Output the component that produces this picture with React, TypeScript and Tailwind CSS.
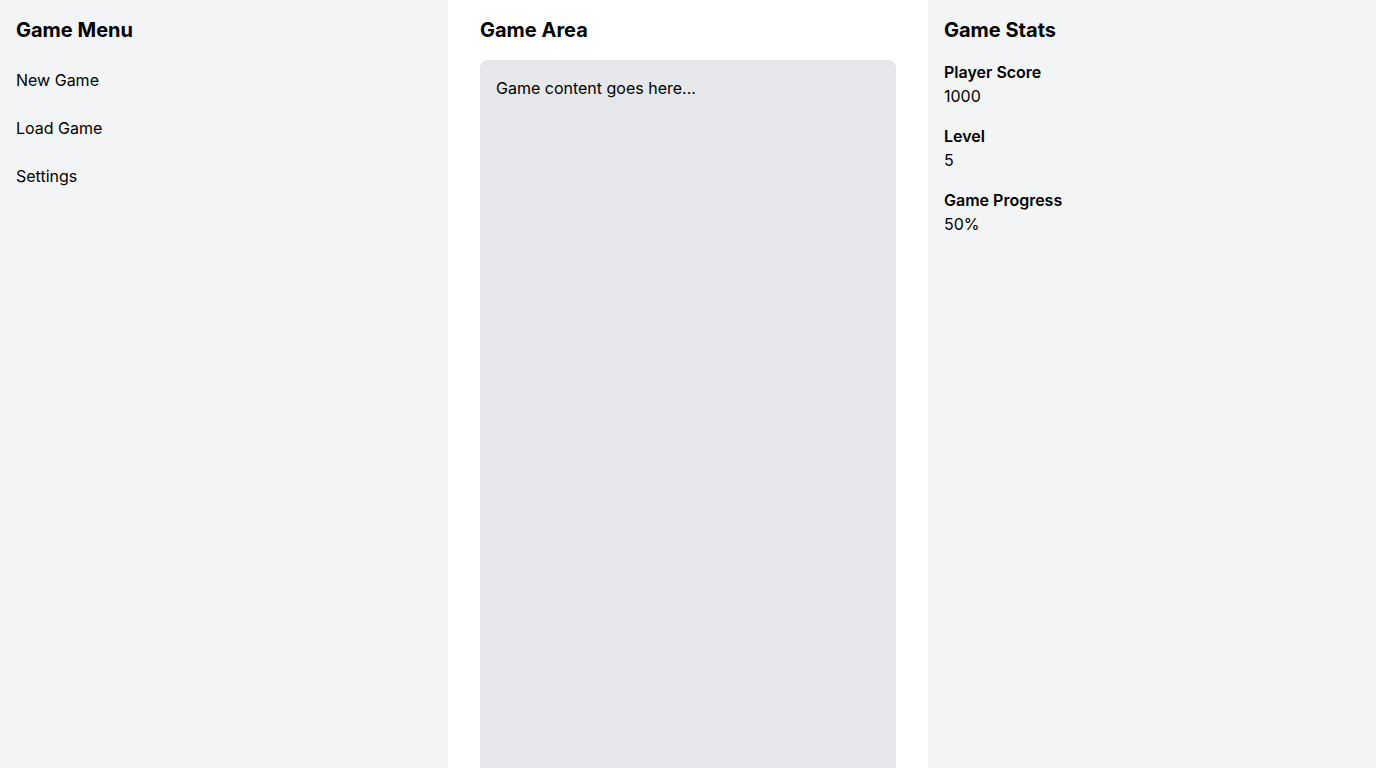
import React from "react";

const menuItems = ["New Game", "Load Game", "Settings"];

const stats = [
  { label: "Player Score", value: "1000" },
  { label: "Level", value: "5" },
  { label: "Game Progress", value: "50%" },
];

export default function App() {
  return (
    <div
      className="flex h-screen overflow-hidden bg-white text-black"
      style={{ fontFamily: "Inter, 'Noto Sans', sans-serif" }}
    >
      {/* menu */}
      <aside className="w-[448px] shrink-0 bg-gray-100 p-4">
        <h2 className="mb-4 text-xl font-bold">Game Menu</h2>
        <ul className="space-y-2">
          {menuItems.map((item) => (
            <li key={item} className="py-2 text-base">
              {item}
            </li>
          ))}
        </ul>
      </aside>

      {/* game area */}
      <main className="flex flex-1 flex-col px-8 pt-4">
        <h2 className="mb-4 text-xl font-bold">Game Area</h2>
        <div className="flex-1 rounded-t-lg bg-gray-200 p-4 text-base">
          Game content goes here...
        </div>
      </main>

      {/* stats */}
      <aside className="w-[448px] shrink-0 bg-gray-100 p-4">
        <h2 className="mb-4 text-xl font-bold">Game Stats</h2>
        <div className="space-y-4">
          {stats.map((s) => (
            <div key={s.label}>
              <div className="font-semibold">{s.label}</div>
              <div>{s.value}</div>
            </div>
          ))}
        </div>
      </aside>
    </div>
  );
}
